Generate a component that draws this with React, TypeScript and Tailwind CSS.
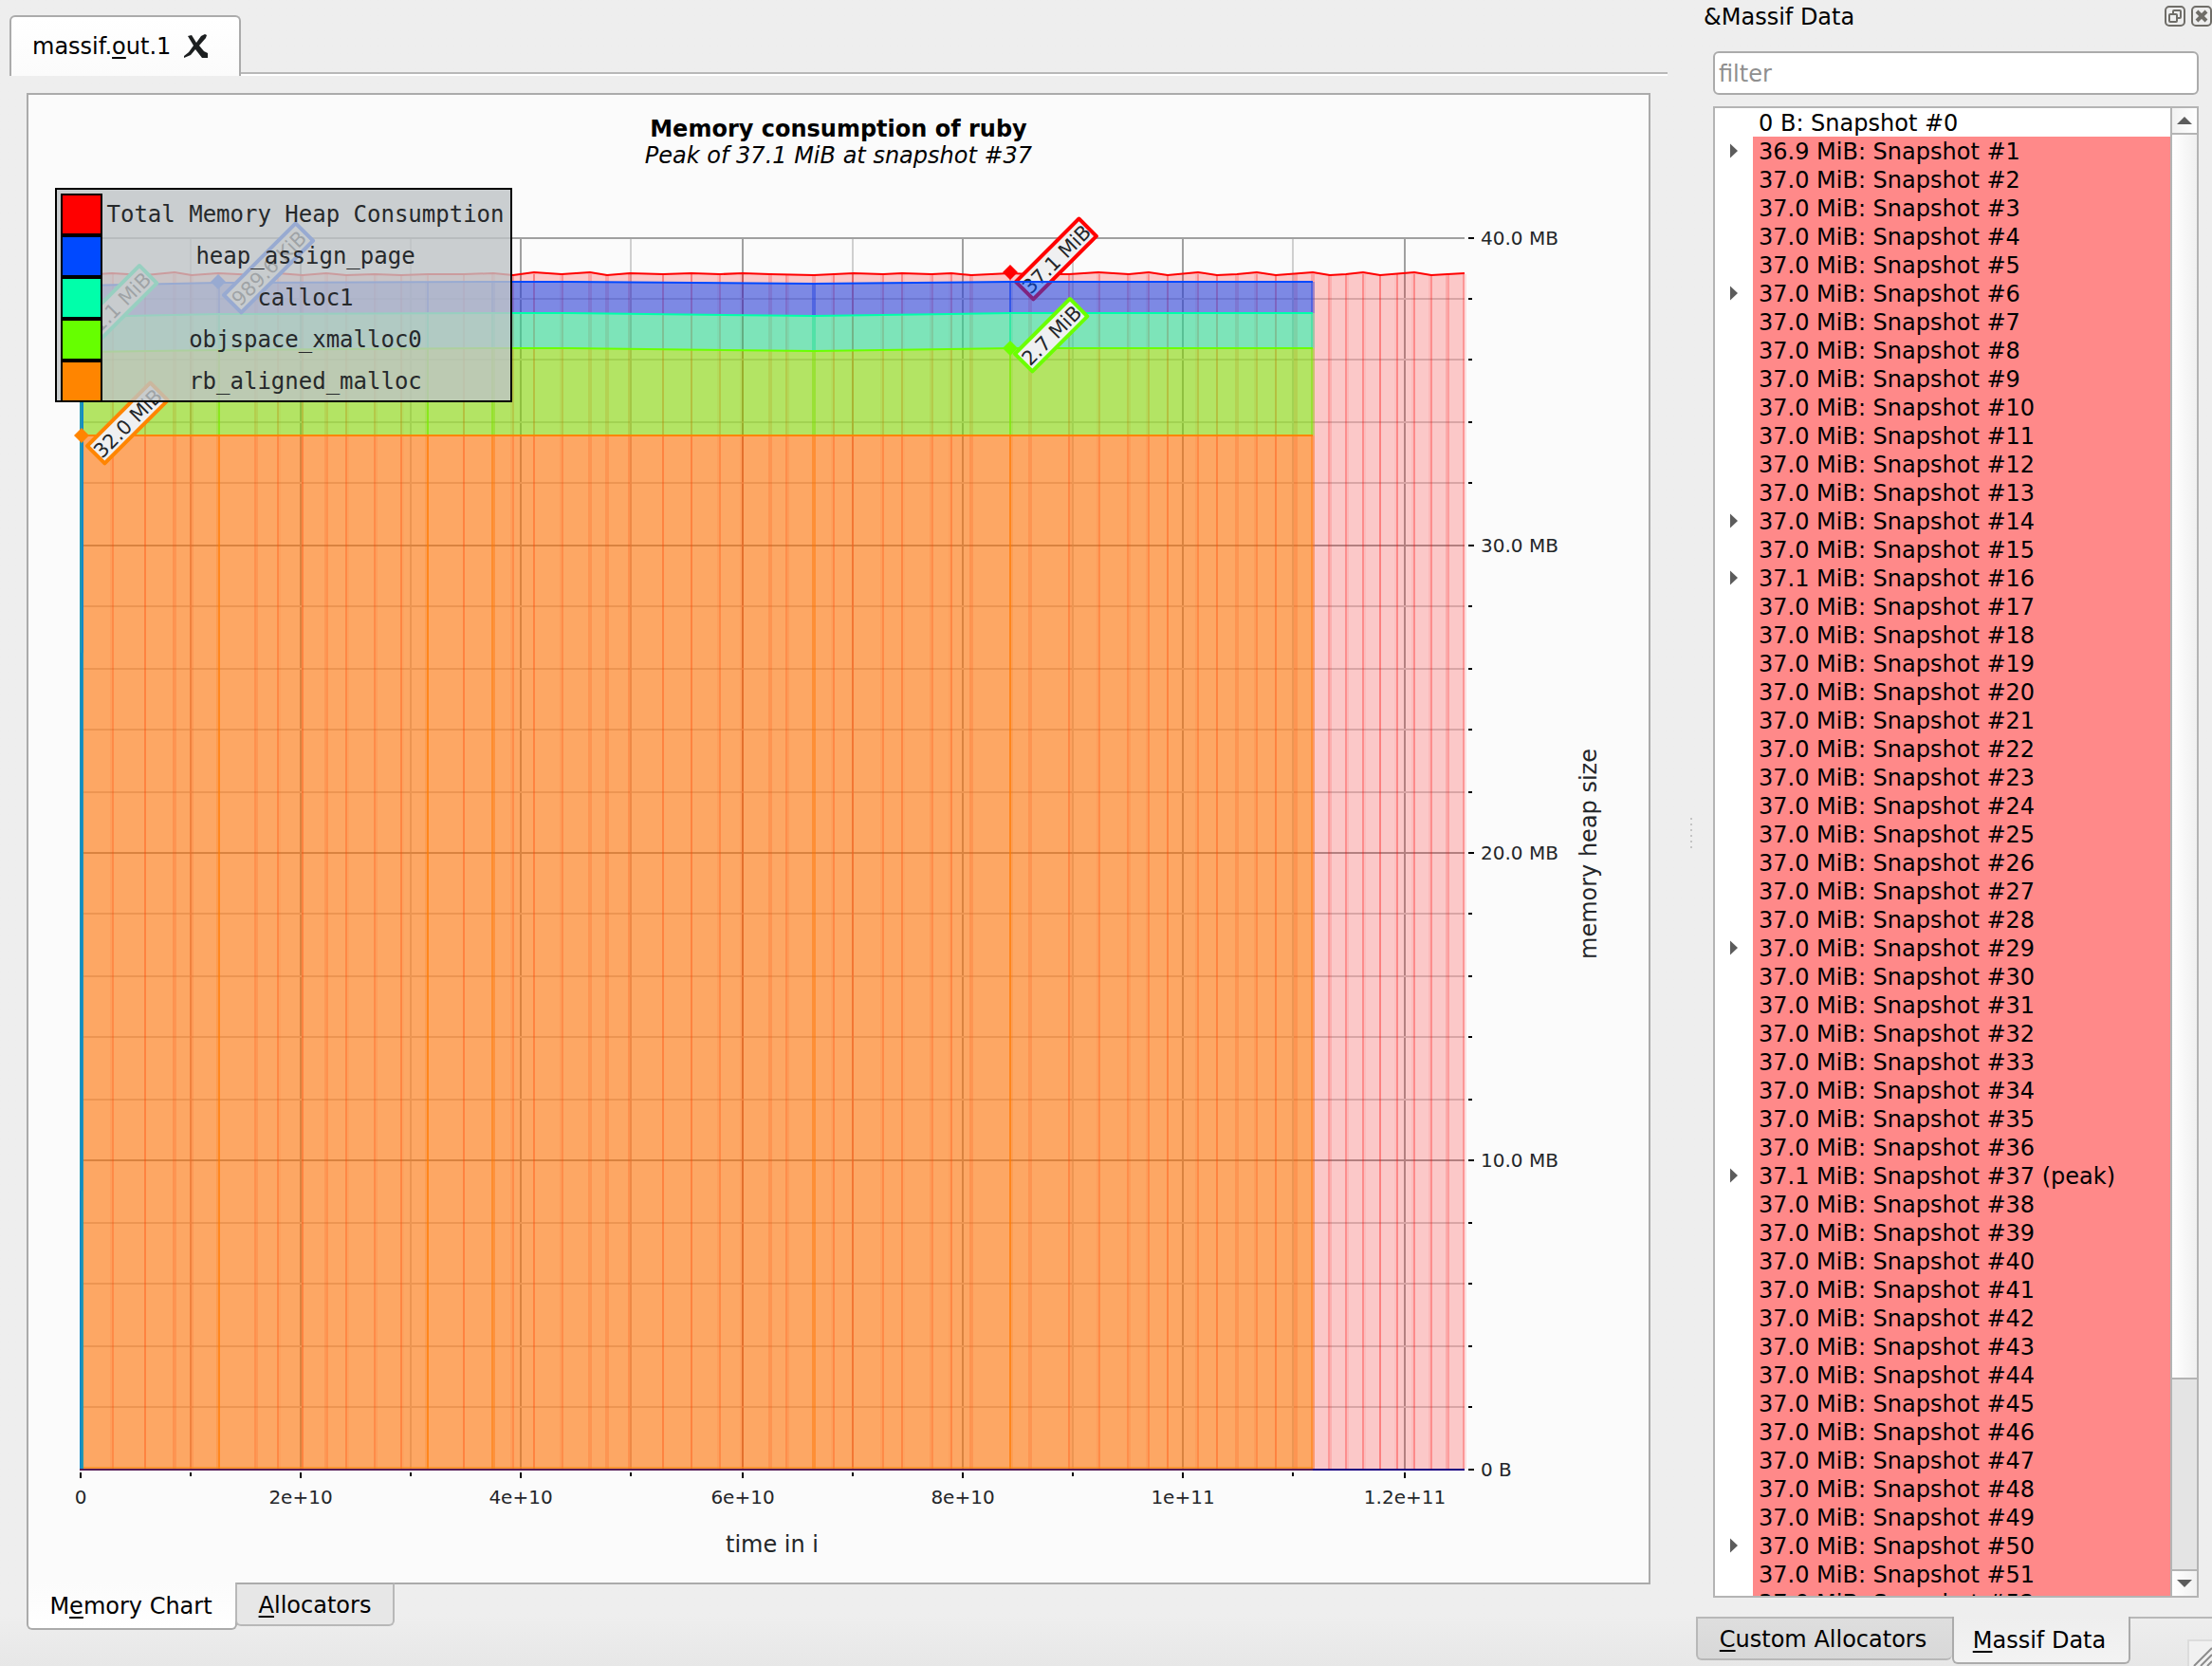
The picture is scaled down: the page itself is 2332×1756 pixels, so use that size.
import React from "react";

const PLOT = { left: 84, right: 1544, top: 250, bottom: 1548 };
const STACK_END = 1384;

const COLORS = {
  red: "#ff0000",
  blue: "#0049ff",
  teal: "#00ffaa",
  green: "#6bff00",
  orange: "#ff8500",
};

const snapshotX = [
  118.6, 153, 183.9, 201.7, 230.6, 269.8, 293.3, 319, 344.2, 365.3, 395.5, 423.2, 450.7, 489,
  519.8, 540.5, 563, 592.5, 622, 640, 663.8, 699, 729, 758.6, 782.6, 812, 829.6, 858, 878.7,
  899, 930.6, 951.2, 982.4, 1002.7, 1023.9, 1065.3, 1086, 1127.3, 1158.6, 1189.6, 1210.6,
  1231, 1262.6, 1283, 1304, 1324.5, 1345, 1366, 1384, 1401.7, 1419.4, 1437.3, 1455, 1472.8,
  1490.7, 1508.6, 1526.2, 1543.6,
];
const detailedX = [87, 230.6, 450.7, 519.8, 858, 1065.3, 1384];

type Point = [number, number];

const total: Point[] = [
  [86, 290], [118, 288], [153, 290], [184, 287], [202, 290], [230, 288], [270, 290], [293, 288],
  [319, 290], [344, 288], [365, 290], [395, 289], [423, 290], [451, 289], [489, 289], [520, 288],
  [541, 290], [563, 287], [592, 289], [622, 287], [640, 290], [664, 288], [699, 289], [729, 288],
  [759, 289], [783, 288], [812, 289], [858, 290], [900, 288], [931, 289], [951, 288], [982, 289],
  [1003, 288], [1024, 290], [1065, 288], [1086, 289], [1127, 289], [1158, 287], [1190, 289],
  [1211, 287], [1231, 290], [1263, 287], [1283, 290], [1304, 289], [1325, 287], [1345, 290],
  [1384, 287], [1402, 290], [1419, 289], [1437, 287], [1455, 290], [1491, 287], [1509, 290],
  [1526, 289], [1544, 288],
];

const floor: Point[] = [[86, 1548], [STACK_END, 1548]];
const orangeLine: Point[] = [[86, 459], [STACK_END, 459]];
const greenLine: Point[] = [[86, 371], [230, 369], [519, 367], [600, 367], [858, 370], [1065, 367], [STACK_END, 367]];
const tealLine: Point[] = [[86, 334], [230, 331], [519, 330], [600, 330], [858, 333], [1065, 330], [STACK_END, 330]];
const blueLine: Point[] = [[86, 301], [230, 298], [519, 297], [600, 297], [858, 299], [1065, 297], [STACK_END, 297]];

const layers = [
  { upper: blueLine, lower: tealLine, color: COLORS.blue },
  { upper: tealLine, lower: greenLine, color: COLORS.teal },
  { upper: greenLine, lower: orangeLine, color: COLORS.green },
  { upper: orangeLine, lower: floor, color: COLORS.orange },
];

const toPoints = (pts: Point[]) => pts.map((p) => p.join(",")).join(" ");

function yAt(pts: Point[], x: number) {
  for (let i = 1; i < pts.length; i++) {
    const [x0, y0] = pts[i - 1];
    const [x1, y1] = pts[i];
    if (x <= x1) return Math.round(y0 + ((Math.max(x, x0) - x0) / (x1 - x0)) * (y1 - y0));
  }
  return pts[pts.length - 1][1];
}

/* A two pixel wide vertical rule whose coverage is shared between two-pixel cells. */
function Rule({ x, y1, y2, color, alpha }: { x: number; y1: number; y2: number; color: string; alpha: number }) {
  const first = Math.floor((x - 1) / 2) * 2;
  const second = Math.max(0, Math.min(1, (x + 1 - (first + 2)) / 2));
  return (
    <g fill={color} shapeRendering="crispEdges">
      <rect x={first} y={y1} width={2} height={y2 - y1} opacity={alpha * (1 - second)} />
      {second > 0.02 && <rect x={first + 2} y={y1} width={2} height={y2 - y1} opacity={alpha * second} />}
    </g>
  );
}

function Tag({ x, y, dx, dy, length, color, label }: {
  x: number; y: number; dx: number; dy: number; length: number; color: string; label: string;
}) {
  return (
    <g>
      <polygon points={`${x - 8},${y} ${x},${y - 8} ${x + 8},${y} ${x},${y + 8}`} fill={color} />
      <g transform={`translate(${x + dx} ${y + dy}) rotate(-45)`}>
        <rect x={0} y={0} width={length} height={26} fill="#eff0f1" stroke={color} strokeWidth={4} strokeLinejoin="round" />
        <text x={length / 2} y={21} textAnchor="middle" fontSize={21} fill="#232629">{label}</text>
      </g>
    </g>
  );
}

const xTicks = Array.from({ length: 13 }, (_, i) => ({
  x: Math.floor((84 + (i * 1396) / 12) / 2) * 2,
  major: i % 2 === 0,
}));
const xLabels = ["0", "2e+10", "4e+10", "6e+10", "8e+10", "1e+11", "1.2e+11"];
const yTicks = Array.from({ length: 21 }, (_, i) => ({
  y: Math.floor((250 + i * 64.9) / 2) * 2,
  major: i % 5 === 0,
}));
const yLabels = ["40.0 MB", "30.0 MB", "20.0 MB", "10.0 MB", "0 B"];

function Chart() {
  return (
    <svg viewBox="30 180 1708 1488" className="block min-h-0 w-full flex-1" role="img" aria-label="Memory consumption of ruby">
      <g shapeRendering="crispEdges">
        {xTicks.map((t) => (
          <rect key={t.x} x={t.x} y={250} width={2} height={1298} fill={t.major ? "#a0a0a0" : "#cfcfcf"} />
        ))}
        {yTicks.filter((t) => !t.major).map((t) => (
          <rect key={t.y} x={84} y={t.y} width={1460} height={2} fill="#cfcfcf" />
        ))}
        {yTicks.filter((t) => t.major).map((t) => (
          <rect key={t.y} x={84} y={t.y} width={1460} height={2} fill="#a0a0a0" />
        ))}
      </g>

      <polygon points={`${toPoints(total)} 1544,1548 85,1548`} fill={COLORS.red} opacity={0.2} />
      {snapshotX.map((x) => (
        <Rule key={x} x={x} y1={289} y2={PLOT.bottom} color={COLORS.red} alpha={0.36} />
      ))}
      <polyline points={toPoints(total)} fill="none" stroke={COLORS.red} strokeWidth={2} />
      <Tag x={1065} y={287} dx={6} dy={10} length={94} color={COLORS.red} label="37.1 MiB" />

      {layers.map((l) => (
        <g key={l.color}>
          <polygon points={`${toPoints(l.upper)} ${toPoints([...l.lower].reverse())}`} fill={l.color} opacity={0.5} />
          {detailedX.map((x) => (
            <Rule key={x} x={x} y1={yAt(l.upper, x)} y2={yAt(l.lower, x)} color={l.color} alpha={0.7} />
          ))}
        </g>
      ))}
      {layers.map((l) => (
        <polyline key={l.color} points={toPoints(l.upper)} fill="none" stroke={l.color} strokeWidth={2} />
      ))}

      <g shapeRendering="crispEdges">
        <rect x={84} y={420} width={4} height={1128} fill="#2197b2" />
        <polygon points="86,420 88,420 86,1548 84,1548" fill="#128ac6" />
        <rect x={88} y={1546} width={1296} height={2} fill="#ff8500" opacity={0.5} />
        <rect x={84} y={1548} width={1300} height={2} fill="#551a55" />
        <rect x={1384} y={1548} width={160} height={2} fill="#1a0080" />
      </g>

      <Tag x={230} y={297} dx={6} dy={14} length={107} color={COLORS.blue} label="989.6 KiB" />
      <Tag x={86} y={334} dx={3} dy={4} length={82} color={COLORS.teal} label="1.1 MiB" />
      <Tag x={1065} y={367} dx={5} dy={6} length={82} color={COLORS.green} label="2.7 MiB" />
      <Tag x={86} y={459} dx={6} dy={11} length={94} color={COLORS.orange} label="32.0 MiB" />

      <g shapeRendering="crispEdges" fill="#000">
        {xTicks.map((t) => (
          <rect key={t.x} x={t.x} y={1552} width={2} height={t.major ? 6 : 4} />
        ))}
        {yTicks.map((t) => (
          <rect key={t.y} x={1548} y={t.y} width={t.major ? 6 : 4} height={2} />
        ))}
      </g>
      <g fontSize={20} fill="#232629">
        {xLabels.map((label, i) => (
          <text key={label} x={xTicks[i * 2].x + 1} y={1585} textAnchor="middle">{label}</text>
        ))}
        {yLabels.map((label, i) => (
          <text key={label} x={1561} y={yTicks[i * 5].y + 8}>{label}</text>
        ))}
      </g>
      <g fontSize={24} fill="#232629" textAnchor="middle">
        <text x={814} y={1636}>time in i</text>
        <text transform="translate(1683 900) rotate(-90)">memory heap size</text>
      </g>
    </svg>
  );
}

const legend = [
  { name: "Total Memory Heap Consumption", swatch: "bg-[#ff0000]" },
  { name: "heap_assign_page", swatch: "bg-[#0049ff]" },
  { name: "calloc1", swatch: "bg-[#00ffaa]" },
  { name: "objspace_xmalloc0", swatch: "bg-[#66ff00]" },
  { name: "rb_aligned_malloc", swatch: "bg-[#ff8500]" },
];

function Legend() {
  return (
    <ul className="absolute left-7 top-[98px] h-[226px] w-[482px] overflow-hidden border-2 border-black bg-[rgba(190,195,198,0.8)] pl-1 pr-0.5 pt-1 font-['DejaVu_Sans_Mono',monospace]">
      {legend.map((item) => (
        <li key={item.name} className="flex h-11 items-center">
          <span className={`h-11 w-11 flex-none border-2 border-black ${item.swatch}`} />
          <span className="flex-1 whitespace-nowrap text-center text-[#26292b]">{item.name}</span>
        </li>
      ))}
    </ul>
  );
}

function Key({ children }: { children: React.ReactNode }) {
  return <span className="underline decoration-2 underline-offset-3 [text-decoration-skip-ink:none]">{children}</span>;
}

const expandable = new Set([1, 6, 14, 16, 29, 37, 50]);
const sizeOf = (n: number) => (n === 0 ? "0 B" : n === 1 ? "36.9 MiB" : n === 16 || n === 37 ? "37.1 MiB" : "37.0 MiB");

function SnapshotList() {
  return (
    <div className="ml-[18px] mr-3.5 mt-3 flex min-h-0 flex-1 border-2 border-[#b4b4b4] bg-white">
      <ul className="min-w-0 flex-1 overflow-hidden">
        {Array.from({ length: 53 }, (_, n) => (
          <li key={n} className="flex h-[30px]">
            <div className="flex w-10 flex-none items-center pl-4">
              {expandable.has(n) && (
                <button type="button" aria-label={`Expand snapshot ${n}`}>
                  <svg width="8" height="16" viewBox="0 0 8 16" className="block">
                    <path d="M0 0.5 8 8 0 15.5Z" fill="#5c5c5c" />
                  </svg>
                </button>
              )}
            </div>
            <span className={`flex-1 whitespace-nowrap pl-1.5 leading-8 ${n === 0 ? "" : "bg-[#ff8989]"}`}>
              {sizeOf(n)}: Snapshot #{n}
              {n === 37 ? " (peak)" : ""}
            </span>
          </li>
        ))}
      </ul>
      <div className="flex w-7 flex-none flex-col border-l-2 border-[#b4b4b4] bg-[#e4e4e4]">
        <button type="button" aria-label="Scroll up" className="flex h-7 items-center justify-center border-b-2 border-[#b4b4b4] bg-linear-to-r from-[#f1f1f1] to-white">
          <svg width="16" height="8" viewBox="0 0 16 8"><path d="M0 8 8 0 16 8Z" fill="#5c5c5c" /></svg>
        </button>
        <div className="flex flex-1 flex-col">
          <div className="h-[1312px] max-h-[87%] border-b-2 border-[#b4b4b4] bg-linear-to-r from-white to-[#f0f0f0]" />
        </div>
        <button type="button" aria-label="Scroll down" className="flex h-7 items-center justify-center border-t-2 border-[#b4b4b4] bg-linear-to-r from-white to-[#f1f1f1]">
          <svg width="16" height="8" viewBox="0 0 16 8"><path d="M0 0 8 8 16 0Z" fill="#5c5c5c" /></svg>
        </button>
      </div>
    </div>
  );
}

export default function App() {
  return (
    <div className="flex h-screen w-full overflow-hidden bg-linear-to-b from-[#eeeeee] from-97% to-[#e7e7e7] font-['DejaVu_Sans',sans-serif] text-[24px] leading-7 text-black">
      <main className="flex min-w-0 flex-1 flex-col pt-4">
        <div className="flex h-16 flex-none items-end pl-2.5">
          <div className="flex h-16 w-[244px] flex-none items-center gap-3.5 rounded-t-md border-2 border-b-0 border-[#ababab] bg-linear-to-b from-white to-[#fbfbfb] pl-[22px]">
            <button type="button">massif.<Key>o</Key>ut.1</button>
            <button type="button" aria-label="Close tab">
              <svg width="26" height="26" viewBox="0 0 26 26" className="block">
                <path d="M4 2 8 1 13 9 18 2 22 0 24 1 23 4 16 12 21 18 25 20 25 25 19 25 12 16 7 22 0 25 0 23 5 19 10 12Z" fill="#1c1f20" />
              </svg>
            </button>
          </div>
          <div className="h-1 flex-1 border-b-2 border-t-2 border-b-white border-t-[#b8b8b8]" />
        </div>

        <section className="relative ml-7 mr-[18px] mt-[18px] flex min-h-0 flex-1 flex-col border-2 border-[#ababab] bg-[#fbfbfb]">
          <header className="h-20 flex-none pt-[22px] text-center">
            <h1 className="font-bold">Memory consumption of ruby</h1>
            <p className="italic">Peak of 37.1 MiB at snapshot #37</p>
          </header>
          <Chart />
          <Legend />
        </section>

        <nav className="relative -mt-0.5 mb-[38px] ml-7 flex h-[50px] flex-none items-start">
          <button type="button" className="h-[50px] w-[222px] rounded-b-md border-2 border-t-0 border-[#ababab] bg-linear-to-b from-[#fbfbfb] to-white pr-0.5 pt-0.5">
            M<Key>e</Key>mory Chart
          </button>
          <button type="button" className="-ml-0.5 h-[46px] w-[168px] rounded-b-md border-2 border-[#b8b8b8] border-t-[#ababab] bg-[#e7e7e7] pt-0.5">
            <Key>A</Key>llocators
          </button>
        </nav>
      </main>

      <div className="flex w-[30px] flex-none flex-col items-end justify-center gap-1 pr-1" aria-hidden="true">
        {[0, 1, 2, 3, 4, 5].map((i) => (
          <span key={i} className="h-0.5 w-0.5 bg-[#c4c4c4]" />
        ))}
      </div>

      <aside className="flex w-[544px] flex-none flex-col">
        <div className="flex h-[34px] flex-none items-center gap-1.5 pl-2">
          <h2 className="flex-1 pt-0.5">&amp;Massif Data</h2>
          <button type="button" aria-label="Float panel">
            <svg width="22" height="22" viewBox="0 0 22 22" fill="none" stroke="#6f6d68" strokeWidth="2" className="block">
              <rect x="1" y="1" width="20" height="20" rx="4" />
              <rect x="9" y="5" width="8" height="8" rx="1" />
              <rect x="5" y="9" width="8" height="8" rx="1" fill="#eeeeee" />
            </svg>
          </button>
          <button type="button" aria-label="Close panel">
            <svg width="22" height="22" viewBox="0 0 22 22" fill="none" stroke="#6f6d68" className="block">
              <rect x="1" y="1" width="20" height="20" rx="4" strokeWidth="2" />
              <path d="M6 6 16 16M16 6 6 16" strokeWidth="4" />
            </svg>
          </button>
        </div>
        <input
          type="text"
          aria-label="filter"
          placeholder="filter"
          className="ml-[18px] mr-3.5 mt-5 h-[46px] flex-none rounded-md border-2 border-[#ababab] bg-white px-1 pt-0.5 placeholder:text-[#8f8f8f]"
        />
        <SnapshotList />
        <nav className="mt-5 flex h-[52px] flex-none items-start">
          <button type="button" className="h-[46px] w-[270px] rounded-b-md border-2 border-r-0 border-[#b8b8b8] bg-linear-to-b from-[#dedede] to-[#d8d8d8] pr-1 pt-0.5">
            <Key>C</Key>ustom Allocators
          </button>
          <button type="button" className="h-[50px] w-[188px] rounded-b-md border-2 border-t-0 border-[#ababab] bg-linear-to-b from-[#eeeeee] to-[#f3f3f3] pr-1 pt-0.5">
            <Key>M</Key>assif Data
          </button>
          <div className="flex h-[52px] flex-1 items-end justify-end border-t-2 border-[#b8b8b8]">
            <svg width="26" height="28" viewBox="0 0 26 28" className="block">
              <rect x="1" y="1" width="30" height="30" fill="#f1f1f1" stroke="#dcdcdc" strokeWidth="2" />
              <path d="M7 28 26 9M14 28 26 16M21 28 26 23" stroke="#8c8c8c" strokeWidth="2" />
            </svg>
          </div>
        </nav>
      </aside>
    </div>
  );
}
